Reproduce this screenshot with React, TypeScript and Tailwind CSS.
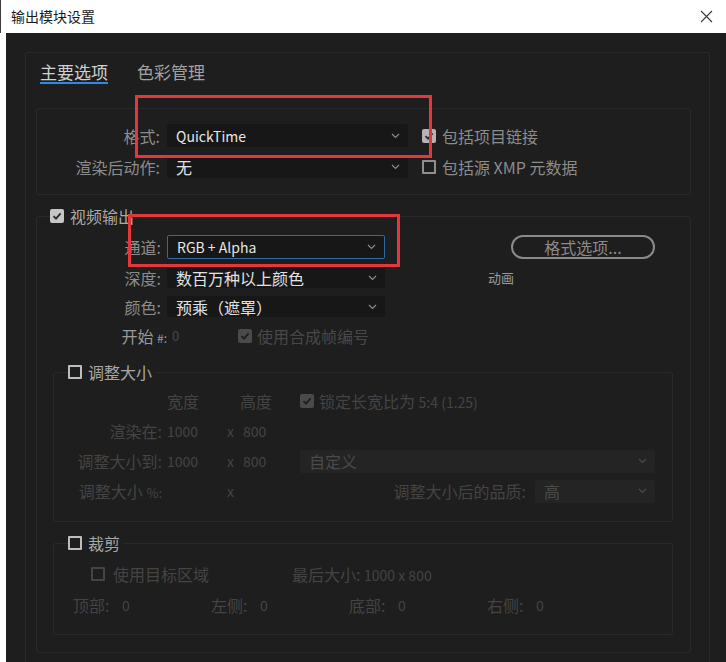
import React from "react";

type Tone = "bright" | "mid" | "dim";

// small down chevron used in the dropdowns
const Chevron = ({ color = "#8c8c8c" }: { color?: string }) => (
  <svg width="9" height="6" viewBox="0 0 9 6" fill="none">
    <path d="M1 1l3.5 3.5L8 1" stroke={color} strokeWidth="1.2" />
  </svg>
);

const CheckBox = ({ checked, tone = "bright" }: { checked: boolean; tone?: Tone }) => {
  if (checked) {
    const bg =
      tone === "bright" ? "bg-[#c6c6c6]" : tone === "mid" ? "bg-[#b4b4b4]" : "bg-[#4a4a4a]";
    const mark = tone === "dim" ? "#1e1e1e" : "#2a2a2a";
    return (
      <span className={`flex h-[14px] w-[14px] shrink-0 items-center justify-center rounded-[2px] ${bg}`}>
        <svg width="10" height="10" viewBox="0 0 10 10" fill="none">
          <path d="M1.5 5.2L4 7.6 8.6 2.4" stroke={mark} strokeWidth="1.8" />
        </svg>
      </span>
    );
  }
  const border =
    tone === "bright" ? "border-[#bdbdbd]" : tone === "mid" ? "border-[#8e8e8e]" : "border-[#444444]";
  return <span className={`block h-[14px] w-[14px] shrink-0 rounded-[1px] border-2 ${border}`} />;
};

interface DropProps {
  text: string;
  width: string;
  height?: string;
  textClass?: string;
  boxClass?: string;
  chevron?: string;
}

const Dropdown = ({
  text,
  width,
  height = "h-[22px]",
  textClass = "text-[16px] text-[#e2e2e2]",
  boxClass = "bg-[#171717]",
  chevron = "#8c8c8c",
}: DropProps) => (
  <div className={`flex items-center justify-between rounded-[2px] pl-[9px] pr-[8px] ${width} ${height} ${boxClass}`}>
    <span className={`leading-none ${textClass}`}>{text}</span>
    <Chevron color={chevron} />
  </div>
);

export default function App() {
  return (
    <div className="relative h-[662px] w-[726px] overflow-hidden bg-white font-['Noto_Sans_CJK_SC','Noto_Sans',sans-serif]">
      {/* Title bar */}
      <div className="flex h-[33px] items-center justify-between border-l border-[#3c3c3c] pl-[10px] pr-[13px]">
        <span className="text-[14px] text-[#1a1a1a]">输出模块设置</span>
        <svg width="13" height="13" viewBox="0 0 13 13" fill="none">
          <path d="M1 1l11 11M12 1L1 12" stroke="#3a3a3a" strokeWidth="1.1" />
        </svg>
      </div>

      <div className="flex h-[629px]">
        <div className="w-[6px] bg-white" />
        <div className="flex-1 overflow-hidden bg-[#1e1e1e] pl-[19px] pt-[19px]">
          <div className="h-[640px] w-[685px] rounded-[3px] border border-[#2a2a2a] pl-[10px] pt-[9px]">
            {/* Tabs */}
            <div className="ml-[4px] flex gap-[29px] text-[17px] leading-[20px]">
              <div className="flex flex-col">
                <span className="text-[#d0d0d0]">主要选项</span>
                <span className="h-[2px] bg-[#2e8ae6]" />
              </div>
              <span className="text-[#a2a2a2]">色彩管理</span>
            </div>

            {/* Format box */}
            <div className="mt-[24px] flex w-[655px] flex-col gap-[8px] rounded-[3px] border border-[#2a2a2a] pb-[16px] pt-[15px]">
              <div className="flex h-[23px] items-center">
                <span className="w-[123px] text-right text-[16px] text-[#8c8c8c]">格式:</span>
                <div className="ml-[7px]">
                  <Dropdown text="QuickTime" width="w-[241px]" height="h-[23px]" textClass="text-[14px] text-[#e6e6e6]" />
                </div>
                <div className="ml-[14px]">
                  <CheckBox checked tone="mid" />
                </div>
                <span className="ml-[6px] text-[16px] text-[#8c8c8c]">包括项目链接</span>
              </div>
              <div className="flex h-[23px] items-center">
                <span className="w-[123px] text-right text-[16px] text-[#8c8c8c]">渲染后动作:</span>
                <div className="ml-[7px]">
                  <Dropdown text="无" width="w-[241px]" height="h-[23px]" />
                </div>
                <div className="ml-[14px]">
                  <CheckBox checked={false} tone="mid" />
                </div>
                <span className="ml-[6px] text-[16px] text-[#8c8c8c]">包括源 XMP 元数据</span>
              </div>
            </div>

            {/* Video output */}
            <fieldset className="mt-[11px] w-[655px] rounded-[3px] border border-[#2a2a2a]">
              <legend className="ml-[13px] pr-[4px]">
                <span className="flex h-[20px] items-center">
                  <CheckBox checked tone="bright" />
                  <span className="ml-[6px] text-[16px] leading-none text-[#a8a8a8]">视频输出</span>
                </span>
              </legend>
              <div className="pb-[17px] pl-[16px] pr-[17px] pt-[9px]">
                <div className="flex h-[24px] items-center">
                  <span className="w-[108px] text-right text-[16px] text-[#8c8c8c]">通道:</span>
                  <div className="ml-[6px]">
                    <Dropdown
                      text="RGB + Alpha"
                      width="w-[218px]"
                      height="h-[24px]"
                      textClass="text-[14px] text-[#e6e6e6]"
                      boxClass="bg-[#171717] border border-[#2f6aa8]"
                    />
                  </div>
                  <div className="ml-[126px] flex h-[24px] w-[144px] items-center justify-center rounded-full border-2 border-[#8a8a8a] text-[16px] text-[#8a8a8a]">
                    格式选项...
                  </div>
                </div>
                <div className="mt-[8px] flex h-[21px] items-center">
                  <span className="w-[108px] text-right text-[16px] text-[#8c8c8c]">深度:</span>
                  <div className="ml-[6px]">
                    <Dropdown text="数百万种以上颜色" width="w-[218px]" height="h-[21px]" />
                  </div>
                  <span className="ml-[103px] text-[13px] text-[#9c9c9c]">动画</span>
                </div>
                <div className="mt-[8px] flex h-[21px] items-center">
                  <span className="w-[108px] text-right text-[16px] text-[#8c8c8c]">颜色:</span>
                  <div className="ml-[6px]">
                    <Dropdown text="预乘（遮罩）" width="w-[218px]" height="h-[21px]" />
                  </div>
                </div>
                <div className="mt-[8px] flex h-[22px] items-center">
                  <span className="w-[114px] text-right text-[16px] text-[#9a9a9a]">
                    开始 <span className="text-[12px]">#:</span>
                  </span>
                  <span className="ml-[5px] w-[66px] text-[13px] text-[#484848]">0</span>
                  <CheckBox checked tone="dim" />
                  <span className="ml-[5px] text-[16px] text-[#484848]">使用合成帧编号</span>
                </div>

                {/* Resize */}
                <fieldset className="mt-[15px] w-[620px] rounded-[3px] border border-[#2a2a2a]">
                  <legend className="ml-[14px] pr-[3px]">
                    <span className="flex h-[20px] items-center">
                      <CheckBox checked={false} tone="bright" />
                      <span className="ml-[6px] text-[16px] leading-none text-[#a8a8a8]">调整大小</span>
                    </span>
                  </legend>
                  <div className="flex flex-col gap-[8px] pb-[19px] pt-[8px] text-[16px] text-[#444444]">
                    <div className="flex h-[22px] items-center">
                      <span className="w-[113px]" />
                      <span className="w-[73px]">宽度</span>
                      <span className="w-[60px]">高度</span>
                      <CheckBox checked tone="dim" />
                      <span className="ml-[5px]">
                        锁定长宽比为 <span className="text-[14px]">5:4 (1.25)</span>
                      </span>
                    </div>
                    <div className="flex h-[22px] items-center">
                      <span className="w-[108px] text-right">渲染在:</span>
                      <span className="ml-[5px] w-[60px] text-[14px]">1000</span>
                      <span className="w-[16px] text-[14px]">x</span>
                      <span className="text-[14px]">800</span>
                    </div>
                    <div className="flex h-[22px] items-center">
                      <span className="w-[108px] text-right">调整大小到:</span>
                      <span className="ml-[5px] w-[60px] text-[14px]">1000</span>
                      <span className="w-[16px] text-[14px]">x</span>
                      <span className="w-[57px] text-[14px]">800</span>
                      <Dropdown
                        text="自定义"
                        width="w-[355px]"
                        height="h-[23px]"
                        textClass="text-[16px] text-[#4a4a4a]"
                        boxClass="bg-[#242424]"
                        chevron="#4a4a4a"
                      />
                    </div>
                    <div className="flex h-[22px] items-center">
                      <span className="w-[108px] text-right">
                        调整大小 <span className="text-[13px]">%:</span>
                      </span>
                      <span className="ml-[5px] w-[60px]" />
                      <span className="w-[16px] text-[14px]">x</span>
                      <span className="w-[283px] text-right">调整大小后的品质:</span>
                      <div className="ml-[9px]">
                        <Dropdown
                          text="高"
                          width="w-[120px]"
                          height="h-[23px]"
                          textClass="text-[16px] text-[#4a4a4a]"
                          boxClass="bg-[#242424]"
                          chevron="#4a4a4a"
                        />
                      </div>
                    </div>
                  </div>
                </fieldset>

                {/* Crop */}
                <fieldset className="mt-[11px] w-[620px] rounded-[3px] border border-[#2a2a2a]">
                  <legend className="ml-[14px] pr-[3px]">
                    <span className="flex h-[20px] items-center">
                      <CheckBox checked={false} tone="bright" />
                      <span className="ml-[6px] text-[16px] leading-none text-[#a8a8a8]">裁剪</span>
                    </span>
                  </legend>
                  <div className="flex flex-col gap-[9px] pb-[18px] pt-[10px] text-[16px] text-[#444444]">
                    <div className="flex h-[22px] items-center pl-[37px]">
                      <CheckBox checked={false} tone="dim" />
                      <span className="ml-[8px] w-[179px]">使用目标区域</span>
                      <span>
                        最后大小: <span className="text-[14px]">1000 x 800</span>
                      </span>
                    </div>
                    <div className="flex h-[22px] items-center pl-[19px]">
                      {["顶部", "左侧", "底部", "右侧"].map((label) => (
                        <div key={label} className="flex w-[138px] items-center">
                          <span className="w-[49px]">{label}:</span>
                          <span className="text-[14px]">0</span>
                        </div>
                      ))}
                    </div>
                  </div>
                </fieldset>
              </div>
            </fieldset>
          </div>
        </div>
      </div>

      {/* Red highlight marks */}
      <div className="absolute left-[135px] top-[95px] h-[63px] w-[297px] border-[3px] border-[#e3373d]" />
      <div className="absolute left-[128px] top-[214px] h-[53px] w-[272px] border-[3px] border-[#e3373d]" />
    </div>
  );
}
